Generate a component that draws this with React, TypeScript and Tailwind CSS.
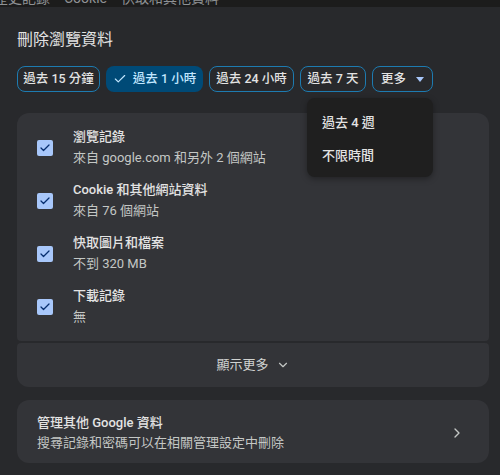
import { Check, ChevronDown, ChevronRight } from 'lucide-react';

const font = { fontFamily: 'Roboto, "Noto Sans CJK TC", sans-serif' };

const ranges = [
  { label: '過去 15 分鐘', w: 'w-[83px]' },
  { label: '過去 1 小時', w: 'w-[97px]', active: true },
  { label: '過去 24 小時', w: 'w-[85px]' },
  { label: '過去 7 天', w: 'w-[66px]' },
];

const items = [
  { title: '瀏覽記錄', sub: '來自 google.com 和另外 2 個網站' },
  { title: 'Cookie 和其他網站資料', sub: '來自 76 個網站' },
  { title: '快取圖片和檔案', sub: '不到 320 MB' },
  { title: '下載記錄', sub: '無' },
];

function Checkbox() {
  return (
    <div className="w-[16px] h-[16px] rounded-[2px] bg-[#a8c7fa] flex items-center justify-center shrink-0">
      <Check size={12} strokeWidth={2.5} className="text-[#062e6f]" />
    </div>
  );
}

export default function App() {
  return (
    <div className="w-[500px] h-[475px] bg-[#28292c] overflow-hidden relative text-[#e3e3e3]" style={font}>
      {/* page behind the dialog, only its bottom edge shows */}
      <div className="h-[7px] bg-[#1c1c1c] overflow-hidden">
        <div className="-mt-[10px] -ml-[6px] text-[14px] leading-[16px] text-[#8e9194] whitespace-nowrap">
          歷史記錄、Cookie、快取和其他資料
        </div>
      </div>

      <div className="pl-[17px] pr-[11px]">
        <h1 className="mt-[21px] text-[16px] leading-[24px] font-normal">刪除瀏覽資料</h1>

        <div className="mt-[14px] flex gap-[6px]">
          {ranges.map(r => (
            <button
              key={r.label}
              className={
                r.active
                  ? `${r.w} h-[26px] rounded-[8px] bg-[#004a77] text-[#c2e7ff] text-[12.5px] font-medium flex items-center justify-center gap-[6px]`
                  : `${r.w} h-[26px] rounded-[8px] border border-[#1d7bb1] text-[#e3e3e3] text-[12.5px] font-medium flex items-center justify-center`
              }
            >
              {r.active && <Check size={14} strokeWidth={2} />}
              {r.label}
            </button>
          ))}
          <button className="w-[61px] h-[26px] rounded-[8px] border border-[#1d7bb1] text-[#e3e3e3] text-[12.5px] font-medium flex items-center justify-center gap-[10px]">
            更多
            <svg width="8" height="5" viewBox="0 0 8 5"><path d="M0 0h8L4 5z" fill="#a8c7fa" /></svg>
          </button>
        </div>

        <div className="mt-[21px] flex flex-col gap-[2px]">
          <div className="bg-[#333438] rounded-t-[12px] rounded-b-[4px] pt-[16px] pb-[16px] pl-[20px] flex flex-col gap-[16px]">
            {items.map(i => (
              <div key={i.title} className="flex items-center gap-[20px]">
                <Checkbox />
                <div className="text-[13px]">
                  <div className="leading-[16px] font-medium text-[#e3e3e3]">{i.title}</div>
                  <div className="mt-[5px] leading-[16px] text-[#c4c7c5]">{i.sub}</div>
                </div>
              </div>
            ))}
          </div>
          <div className="bg-[#333438] rounded-t-[4px] rounded-b-[12px] h-[44px] flex items-center justify-center gap-[7px] text-[13px] text-[#d0d2d0]">
            顯示更多
            <ChevronDown size={14} className="text-[#c4c7c5]" />
          </div>
        </div>

        <div className="mt-[13px] bg-[#333438] rounded-[12px] pt-[15px] pb-[12px] pl-[20px] pr-[20px] flex items-center">
          <div className="flex-1 text-[13px]">
            <div className="leading-[16px] font-medium text-[#e3e3e3]">管理其他 Google 資料</div>
            <div className="mt-[4px] leading-[16px] text-[#c4c7c5]">搜尋記錄和密碼可以在相關管理設定中刪除</div>
          </div>
          <ChevronRight size={16} className="text-[#c4c7c5] mr-[4px]" />
        </div>
      </div>

      <div className="absolute left-[307px] top-[98px] w-[126px] h-[79px] rounded-[8px] bg-[#1f1f1f] shadow-[0_2px_6px_rgba(0,0,0,0.35)] flex flex-col justify-center gap-[17px] pt-[4px] pl-[15px] text-[13px] font-medium text-[#e3e3e3]">
        <div className="leading-[16px]">過去 4 週</div>
        <div className="leading-[16px]">不限時間</div>
      </div>
    </div>
  );
}
